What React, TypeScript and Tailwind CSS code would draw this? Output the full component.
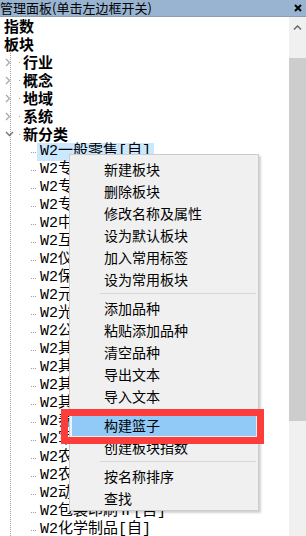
const groups: string[][] = [
  ['新建板块', '删除板块', '修改名称及属性', '设为默认板块', '加入常用标签', '设为常用板块'],
  ['添加品种', '粘贴添加品种', '清空品种', '导出文本', '导入文本'],
  ['构建篮子', '创建板块指数'],
  ['按名称排序', '查找'],
];

const boards = [
  'W2一般零售[自]',
  'W2专业服务[自]',
  'W2专业工程[自]',
  'W2专用设备[自]',
  'W2中药Ⅱ[自]',
  'W2互联网电商[自]',
  'W2仪器仪表[自]',
  'W2保险Ⅱ[自]',
  'W2元件[自]',
  'W2光学光电子[自]',
  'W2公路铁路运输[自]',
  'W2其他家电Ⅱ[自]',
  'W2其他电子Ⅱ[自]',
  'W2其他电源设备[自]',
  'W2其他饮料[自]',
  'W2养殖业[自]',
  'W2军工电子[自]',
  'W2农产品加工[自]',
  'W2农化制品[自]',
  'W2动物保健Ⅱ[自]',
  'W2包装印刷Ⅱ[自]',
  'W2化学制品[自]',
];

const Chevron = ({ open }: { open?: boolean }) =>
  open ? (
    <svg width="9" height="6" viewBox="0 0 9 6">
      <path d="M1 1l3.5 3.5L8 1" fill="none" stroke="#707070" strokeWidth="1.3" />
    </svg>
  ) : (
    <svg width="6" height="9" viewBox="0 0 6 9">
      <path d="M1 1l3.5 3.5L1 8" fill="none" stroke="#a8a8a8" strokeWidth="1.3" />
    </svg>
  );

const Category = ({ label, open }: { label: string; open?: boolean }) => (
  <div className="flex h-[18px] items-center">
    <span className="flex w-[16px] items-center pl-[5px]">
      <Chevron open={open} />
    </span>
    <span className="ml-[3px] h-px w-px bg-[#a0a0a0]" />
    <span className="ml-[3px] font-bold leading-[18px]">{label}</span>
  </div>
);

const App = () => {
  return (
    <div className="relative h-[536px] w-[306px] overflow-hidden bg-white font-['Noto_Sans_CJK_SC',sans-serif] text-black">
      {/* Title bar */}
      <div className="flex h-[17px] items-center justify-between border-b border-[#8f9cab] bg-[#99b4d1]">
        <span className="text-[13px] leading-[16px]">管理面板(单击左边框开关)</span>
        <svg width="8" height="8" viewBox="0 0 8 8" className="mr-[4px]">
          <path d="M1 1l6 6M7 1l-6 6" stroke="#000" strokeWidth="2" />
        </svg>
      </div>

      <div className="flex h-[519px]">
        {/* Tree */}
        <div className="flex-1 overflow-hidden text-[15px]">
          <div className="h-[18px] pl-[4px] font-bold leading-[18px]">指数</div>
          <div className="h-[18px] pl-[4px] font-bold leading-[18px]">板块</div>
          <div className="bg-[image:repeating-linear-gradient(to_bottom,#a0a0a0_0_1px,transparent_1px_2px)] bg-[length:1px_100%] bg-[position:10px_0] bg-no-repeat">
            <Category label="行业" />
            <Category label="概念" />
            <Category label="地域" />
            <Category label="系统" />
            <Category label="新分类" open />
            {boards.map((b, i) => (
              <div key={i} className="flex h-[18px] items-center">
                <span className="w-[31px]" />
                <span className="h-px w-[6px] bg-[image:repeating-linear-gradient(to_right,#a0a0a0_0_1px,transparent_1px_2px)]" />
                <span
                  className={`whitespace-nowrap px-[3px] font-['Liberation_Mono','Noto_Sans_CJK_SC',monospace] leading-[18px] ${
                    i === 0 ? 'bg-[#cce8ff]' : ''
                  }`}
                >
                  {b}
                </span>
              </div>
            ))}
          </div>
        </div>

        {/* Scrollbar */}
        <div className="flex w-[17px] flex-col bg-[#f0f0f0]">
          <div className="flex h-[41px] justify-center pt-[8px]">
            <svg width="9" height="5" viewBox="0 0 9 5">
              <path d="M1 4.5l3.5-3.5L8 4.5" fill="none" stroke="#606060" strokeWidth="1.3" />
            </svg>
          </div>
          <div className="h-[363px] bg-[#cdcdcd]" />
          <div className="flex-1" />
        </div>
      </div>

      {/* Context menu */}
      <div className="absolute left-[69px] top-[154px] w-[190px] border border-[#cccccc] bg-[#f0f0f0] pb-[1px] pt-[3px] text-[14px] shadow-[2px_2px_2px_rgba(0,0,0,0.18)]">
        {groups.map((g, gi) => (
          <div key={gi}>
            {gi > 0 && (
              <div className="flex h-[7px] items-center">
                <div className="ml-[30px] mr-[2px] h-px flex-1 bg-[#d7d7d7]" />
              </div>
            )}
            {g.map((item) => (
              <div
                key={item}
                className={`mx-[2px] h-[22px] pl-[32px] leading-[22px] ${
                  item === '构建篮子' ? 'bg-[#91c9f7]' : ''
                }`}
              >
                {item}
              </div>
            ))}
          </div>
        ))}
      </div>

      {/* Red annotation box */}
      <div className="absolute left-[61px] top-[409px] h-[35px] w-[203px] border-[7px] border-[#fd3c3c]" />
    </div>
  );
};

export default App;
